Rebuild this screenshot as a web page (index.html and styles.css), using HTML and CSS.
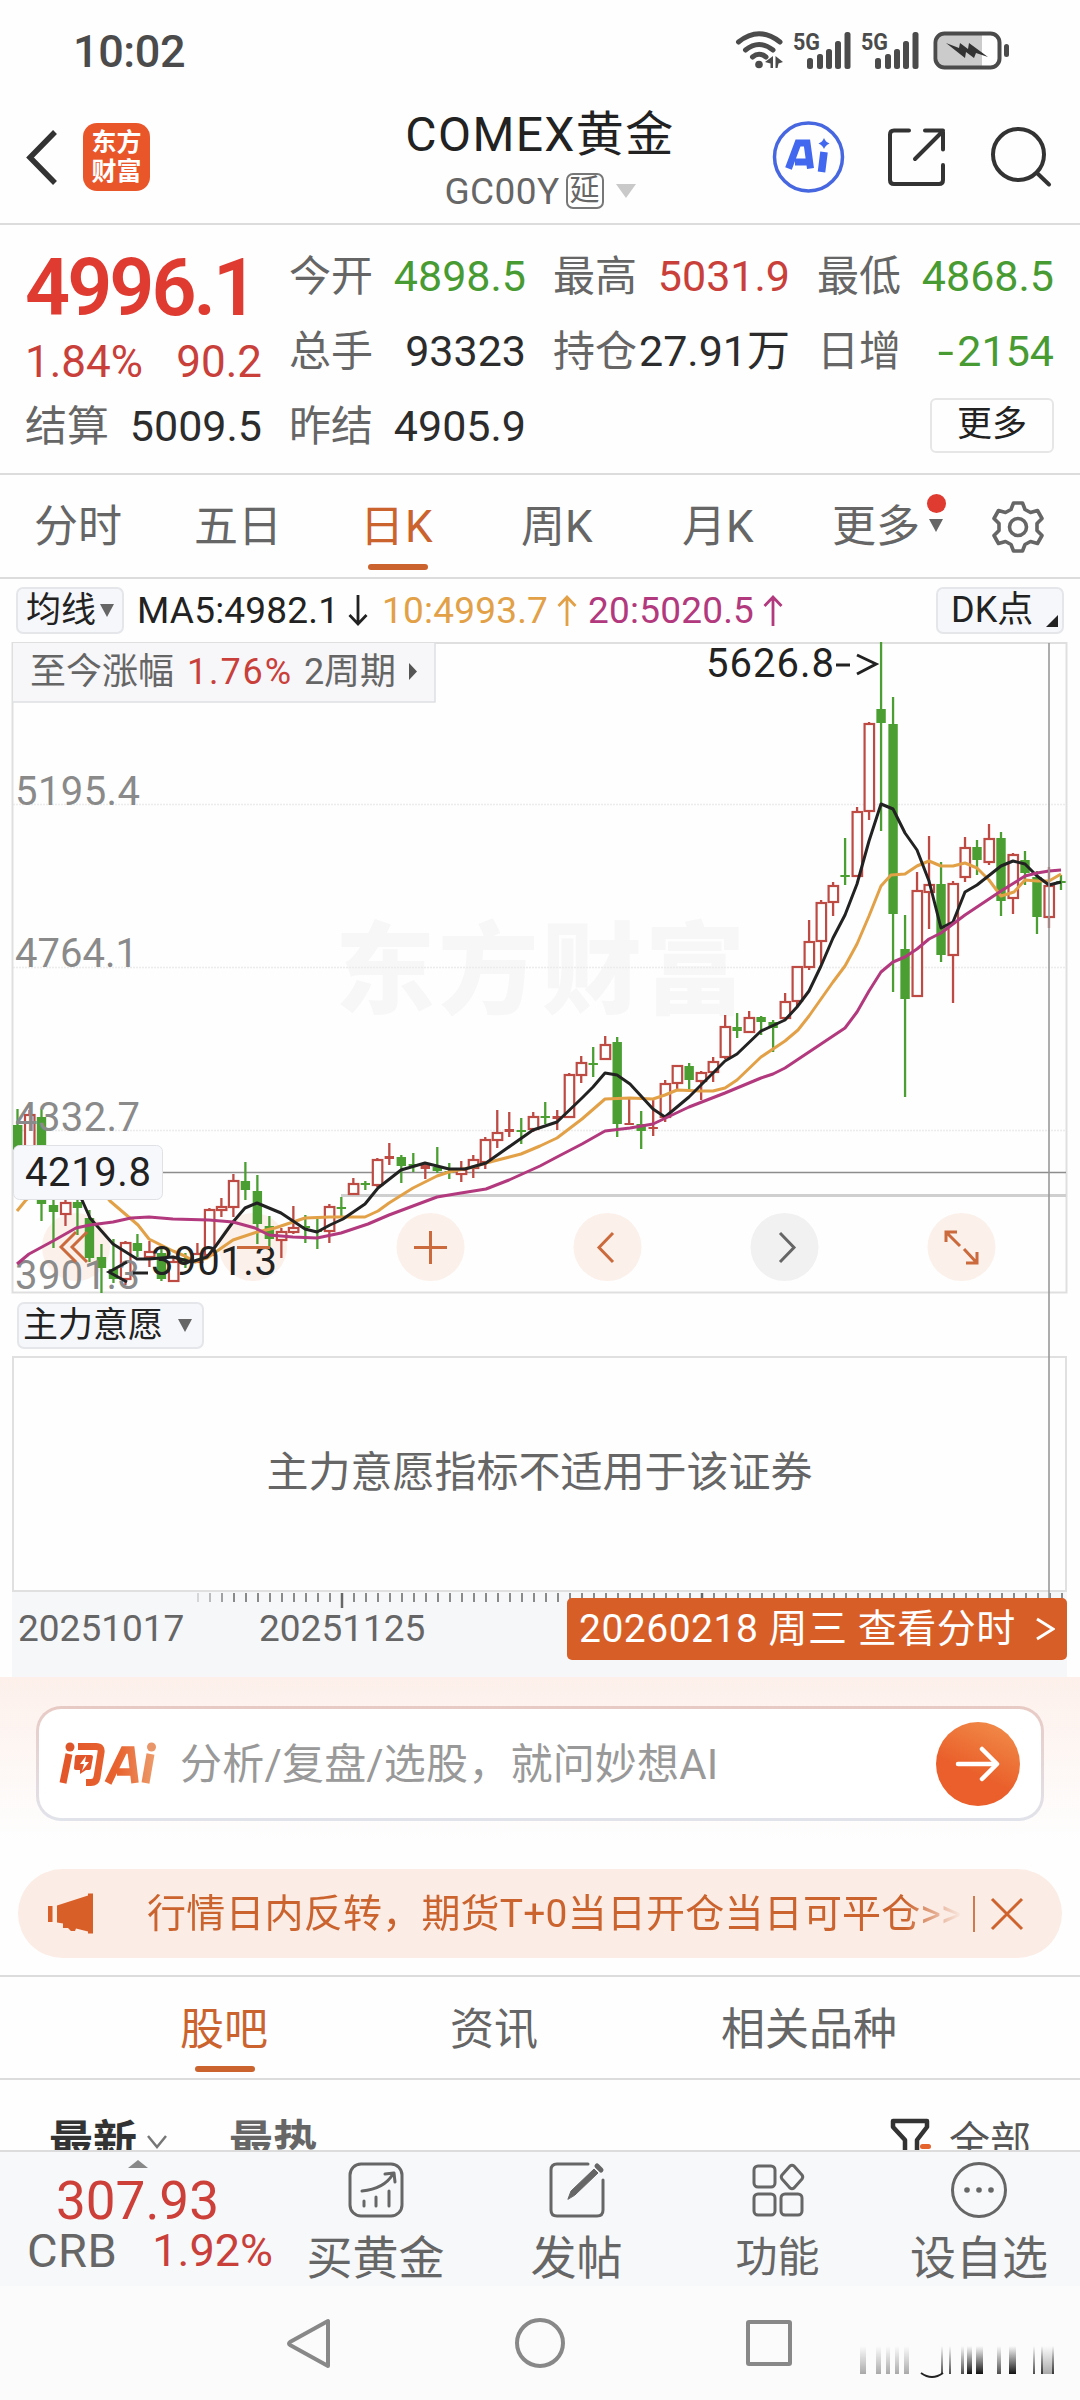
FILE: index.html
```html
<!DOCTYPE html>
<html lang="zh-CN">
<head>
<meta charset="utf-8">
<title>COMEX黄金</title>
<link rel="stylesheet" href="styles.css">
</head>
<body>
<div class="screen">
  <div class="status">
    <span class="clock">10:02</span>
    <svg class="status-icons" width="280" height="44" viewBox="732 28 280 44">
      <g fill="none" stroke="#4b4b4b" stroke-width="5" stroke-linecap="round">
        <path d="M738.500 42Q759 25.500 780 42M745.500 50Q759 39 773 50M752.500 57Q759 51.500 766 57"/>
      </g>
      <g fill="#4b4b4b">
        <circle cx="759" cy="64.500" r="3.800"/>
        <path d="M773 56v12h-2.500v-4.500L765 62zM775.500 56l7.500 6-4.500 1.500-1 4.500h-2z"/>
        <rect x="807" y="58" width="6" height="11" rx="2.500"/><rect x="817" y="54" width="6" height="15" rx="2.500"/><rect x="826" y="49" width="6" height="20" rx="2.500"/><rect x="835" y="41" width="6" height="28" rx="2.500"/><rect x="844.500" y="32" width="6" height="37" rx="2.500"/>
        <rect x="875" y="58" width="6" height="11" rx="2.500"/><rect x="885" y="54" width="6" height="15" rx="2.500"/><rect x="894" y="49" width="6" height="20" rx="2.500"/><rect x="903" y="41" width="6" height="28" rx="2.500"/><rect x="912.500" y="32" width="6" height="37" rx="2.500"/>
        <text class="five-g" x="793" y="50" textLength="27" lengthAdjust="spacingAndGlyphs">5G</text>
        <text class="five-g" x="861" y="50" textLength="27" lengthAdjust="spacingAndGlyphs">5G</text>
        <path d="M938 35h44v31h-44z" fill="#cbcbcb"/>
        <rect x="935.500" y="33.500" width="64" height="34" rx="9" fill="none" stroke="#4b4b4b" stroke-width="4"/>
        <path d="M946 43l13 5 1-5 8 6 1-6 19 14-12-4-2 5-8-6-1 6z" fill="#333"/>
        <rect x="1004" y="44" width="5" height="13" rx="2.500"/>
      </g>
    </svg>
  </div>

  <header class="header">
    <div class="header-left">
      <svg width="34" height="60" viewBox="0 0 34 60"><path d="M30 5L5 30.500 30 56" fill="none" stroke="#333" stroke-width="5.500"/></svg>
      <div class="brand"><span>东方</span><span>财富</span></div>
    </div>
    <div class="title-box">
      <h1 class="title">COMEX黄金</h1>
      <div class="subtitle"><span>GC00Y</span><span class="delay">延</span><i class="tri"></i></div>
    </div>
    <svg class="header-icons" width="290" height="80" viewBox="765 117 290 80" fill="none" stroke="#333" stroke-width="4" stroke-linecap="round" stroke-linejoin="round">
      <circle cx="808.500" cy="157" r="34" stroke="#4767e0" stroke-width="3.500"/>
      <path d="M788.500 168.500L798 143h9l3.500 25.500M795 162h13" stroke="#4168ef" stroke-width="7" stroke-linejoin="miter" stroke-linecap="butt"/>
      <path d="M824 152l-2.500 20" stroke="#4168ef" stroke-width="7.500" stroke-linecap="butt"/>
      <path d="M824 138q1.500 4 5.500 5.500-4 1.500-5.500 5.500-1.500-4-5.500-5.500 4-1.500 5.500-5.500z" fill="#4168ef" stroke="none"/>
      <path d="M909 130.500h-15q-4 0-4 4V180q0 4 4 4h45q4 0 4-4v-15M925 130.500h18v19M943 131l-28 28"/>
      <circle cx="1018.500" cy="154.500" r="25.500"/>
      <path d="M1037 173l12 11.500"/>
    </svg>
  </header>

  <section class="quote">
    <div class="price-cell">
      <div class="price">4996.1</div>
      <div class="change"><span>1.84%</span><span>90.2</span></div>
    </div>
    <div class="kv"><span>今开</span><b class="green">4898.5</b></div>
    <div class="kv"><span>最高</span><b class="red">5031.9</b></div>
    <div class="kv"><span>最低</span><b class="green">4868.5</b></div>
    <div class="kv"><span>总手</span><b>93323</b></div>
    <div class="kv"><span>持仓</span><b>27.91万</b></div>
    <div class="kv"><span>日增</span><b class="green"><i class="minus">-</i>2154</b></div>
    <div class="kv"><span>结算</span><b>5009.5</b></div>
    <div class="kv"><span>昨结</span><b>4905.9</b></div>
    <div class="more-cell"><span class="more-btn">更多</span></div>
  </section>

  <nav class="periods">
    <span class="p-min">分时</span><span class="p-five">五日</span><span class="p-day active">日K</span><span class="p-week">周K</span><span class="p-month">月K</span>
    <span class="p-more">更多<i class="dot"></i><i class="caret"></i></span>
    <svg class="gear" width="56" height="56" viewBox="-28 -28 56 56" fill="none" stroke="#666" stroke-width="3.600" stroke-linejoin="round">
      <path d="M-4.500-24h9L7-17.500 12.500-14.500 19.500-16.500 24-8.500 19-3.500V3.500L24 8.500 19.500 16.500 12.500 14.500 7 17.500 4.500 24h-9L-7 17.500-12.500 14.500-19.500 16.500-24 8.500-19 3.500V-3.500L-24-8.500-19.500-16.500-12.500-14.500-7-17.500z"/>
      <circle r="8.500"/>
    </svg>
  </nav>

  <div class="ma-row">
    <span class="chip ma-chip">均线<i class="caret"></i></span>
    <span class="ma ma5">MA5:4982.1<svg width="22" height="34" viewBox="0 0 22 34"><path d="M11 2v29M2.500 22L11 31l8.500-9"/></svg></span>
    <span class="ma ma10">10:4993.7<svg width="22" height="34" viewBox="0 0 22 34"><path d="M11 33V4M2.500 13L11 4l8.500 9"/></svg></span>
    <span class="ma ma20">20:5020.5<svg width="22" height="34" viewBox="0 0 22 34"><path d="M11 33V4M2.500 13L11 4l8.500 9"/></svg></span>
    <span class="chip dk-chip">DK点<i class="corner"></i></span>
  </div>

  <div class="plots">
    <svg class="chart" width="1080" height="652" viewBox="0 642 1080 652">
      <text class="wm" x="335" y="1006" textLength="410">东方财富</text>
      <g class="grid"><path d="M13 804.500H1066M13 967.500H1066M13 1130.500H1066"/></g>
      <path class="frame" d="M12.500 643H1066.500V1292.500H12.500z"/>
      <path d="M341 1195.500H1066" stroke="#cfcfcf" stroke-width="3"/>
      <path d="M13 1172.500H1066" stroke="#8d8d8d" stroke-width="1.500"/>
      <g class="tools">
        <circle cx="76" cy="1247" r="34"/><circle cx="253" cy="1247" r="34"/><circle cx="430.500" cy="1247" r="34"/><circle cx="607.500" cy="1247" r="34"/><circle class="off" cx="784.500" cy="1247" r="34"/><circle cx="961.500" cy="1247" r="34"/>
      </g>
      <g id="candles"></g>
      <g class="axis-label">
        <text x="15" y="805" textLength="125">5195.4</text>
        <text x="15" y="967" textLength="123">4764.1</text>
        <text x="15" y="1131" textLength="125">4332.7</text>
        <text x="15" y="1289" textLength="125">3901.3</text>
      </g>
      <g id="averages"></g>
      <g class="note"><text x="706" y="677" textLength="128">5626.8</text><path d="M836 665h14M857 655l19 9-19 10M127 1262l-18 10 18 10M133 1273h15"/><text x="151" y="1275" textLength="126">3901.3</text></g>
      <g class="tools">
        <path d="M76 1232l-15 15 15 15M87 1232l-15 15 15 15M237 1247.500h33M414 1247.500h33M430.500 1231v33M613 1233l-14 14.500 14 14.500M946 1242v-10h11M946 1232l14 14M966 1263h11v-11M977 1263l-13-14"/>
        <path class="next" d="M780 1233l14 14.500-14 14.500"/>
      </g>
      <rect x="13.500" y="1145.500" width="149" height="54" rx="6" fill="#f7f8fb" stroke="#dfe1e5"/>
      <text class="cross-val" x="25" y="1186" textLength="126">4219.8</text>
      <path d="M13 643H435V702H13z" fill="#f7f7fa"/><path d="M435 643V702H13" fill="none" stroke="#dedfe2" stroke-width="1.500"/>
      <g class="range"><text x="30" y="684" textLength="144">至今涨幅</text><text class="up" x="187" y="684" textLength="104">1.76%</text><text x="304" y="684" textLength="92">2周期</text><path d="M409 663v17l8-8.500z" fill="#555"/></g>
    </svg>
    <div class="ind-row"><span class="chip ind-chip">主力意愿<i class="caret"></i></span></div>
    <div class="panel">主力意愿指标不适用于该证券</div>
    <div class="timeline">
      <svg class="ticks" width="1055" height="18" viewBox="12 1592 1055 18" id="ticks"></svg>
      <div class="dates"><span>20251017</span><span>20251125</span></div>
      <span class="date-badge">20260218 周三 查看分时<svg width="20" height="26" viewBox="0 0 20 26"><path d="M2 3l16 10L2 23" fill="none" stroke="#fff" stroke-width="3"/></svg></span>
    </div>
    <i class="crosshair"></i>
  </div>

  <section class="ask">
    <div class="ask-box">
      <svg class="ask-logo" width="100" height="46" viewBox="58 1740 100 46">
        <defs><linearGradient id="lg" x1="58" x2="158" y1="0" y2="0" gradientUnits="userSpaceOnUse"><stop offset="0" stop-color="#e2552a"/><stop offset=".6" stop-color="#e8632f"/><stop offset="1" stop-color="#eda070"/></linearGradient></defs>
        <g fill="none" stroke="url(#lg)" stroke-width="7">
          <path d="M69 1754l-6 29M78 1746.500h18q6 0 5 6l-4 25q-1 5-6 5h-5"/>
          <path d="M108 1783l16-33h7l4 33M117 1772h17" stroke-width="7.500"/>
          <path d="M150.500 1754l-5 29" stroke-width="8"/>
        </g>
        <path d="M77 1755h14q2 0 2 2l-2 11q0 2-2 2h-3l-6 4v-4h-4q-2 0-2-2l1-11q0-2 2-2z" fill="#e2552a"/>
        <path d="M86 1756l-6 8h4l-2 7 7-9h-4z" fill="#fff"/>
        <circle cx="70" cy="1747" r="4.500" fill="#dd562b"/><circle cx="151.500" cy="1747" r="4.500" fill="#e8966a"/>
      </svg>
      <span class="ask-hint">分析/复盘/选股，就问妙想AI</span>
      <span class="go"><svg width="84" height="84" viewBox="0 0 84 84"><path d="M22 42h37M46 27l15 15-15 15" fill="none" stroke="#fff" stroke-width="4.500" stroke-linecap="round" stroke-linejoin="round"/></svg></span>
    </div>
  </section>

  <div class="banner">
    <svg width="48" height="42" viewBox="46 1893 48 42" fill="#d95f29"><path d="M48 1906h4.500v16H48zM57 1905.500l31-10v-2h5v40h-5v-2l-12-3-1 2.500h-4l-3-3h-5v-4.500l-6-1z"/></svg>
    <span class="banner-text">行情日内反转，期货T+0当日开仓当日可平仓&gt;&gt;</span>
    <i class="banner-line"></i>
    <svg width="34" height="34" viewBox="0 0 34 34"><path d="M2 2l30 30M32 2L2 32" stroke="#cf632d" stroke-width="3"/></svg>
  </div>

  <nav class="feeds"><span class="active">股吧</span><span>资讯</span><span>相关品种</span></nav>

  <div class="sort">
    <b>最新</b><svg class="sort-v" width="22" height="16" viewBox="0 0 22 16"><path d="M2 2l9 11 9-11" fill="none" stroke="#777" stroke-width="2.500"/></svg>
    <b class="hot">最热</b>
    <svg class="filter" width="44" height="44" viewBox="0 0 44 44"><path d="M4 4h34v6L28 23v17h-12V23L4 10z" fill="none" stroke="#333" stroke-width="4.500" stroke-linejoin="round"/><rect x="31" y="27" width="11" height="5" rx="2.500" fill="#e5632c"/></svg>
    <span class="all">全部</span>
  </div>

  <footer class="bar">
    <div class="crb"><i class="up-tri"></i><div class="crb-val">307.93</div><div class="crb-row"><span>CRB</span><span class="red">1.92%</span></div></div>
    <div class="act"><svg width="60" height="60" viewBox="-30 -30 60 60"><rect x="-26" y="-26" width="52" height="52" rx="11"/><path d="M-14 1Q8-1 17-16M9-16l9-1 1 9M-12 11v5M0 7v9M13 1v15"/></svg><span>买黄金</span></div>
    <div class="act"><svg width="60" height="60" viewBox="-30 -30 60 60"><path d="M11-26H-20q-6 0-6 6V20q0 6 6 6H20q6 0 6-6V-10"/><path d="M-9 9l3-8 23-22 4 4L-2 5z" fill="#666" stroke-width="1"/><path d="M20-24l4 4" stroke-width="5"/></svg><span>发帖</span></div>
    <div class="act fn"><svg width="60" height="60" viewBox="-30 -30 60 60"><rect x="-24" y="-24" width="21" height="21" rx="4"/><rect x="-24" y="4" width="21" height="21" rx="4"/><rect x="3" y="4" width="21" height="21" rx="4"/><path d="M12-24q2-1.500 4 0l8 9q1.500 2 0 4l-8 9q-2 1.500-4 0l-8-9q-1.500-2 0-4z"/></svg><span>功能</span></div>
    <div class="act"><svg width="60" height="60" viewBox="-30 -30 60 60"><circle r="26.500"/><g fill="#666" stroke="none"><circle cx="-12" r="2.800"/><circle r="2.800"/><circle cx="12" r="2.800"/></g></svg><span>设自选</span></div>
  </footer>

  <div class="sysnav">
    <svg width="1080" height="114" viewBox="0 2286 1080 114">
      <defs><linearGradient id="fade" x1="0" x2="0" y1="0" y2="1"><stop offset="0" stop-color="#222" stop-opacity="0"/><stop offset="1" stop-color="#111"/></linearGradient></defs>
      <g fill="none" stroke="#888" stroke-width="4" stroke-linejoin="round"><path d="M328 2321v45L290 2345q-2-1.500 0-3z"/><circle cx="540" cy="2343" r="23"/><rect x="748" y="2322" width="42" height="42" rx="1"/></g>
      <g fill="url(#fade)">
        <g opacity=".35"><rect x="860" y="2346" width="6" height="28"/><rect x="876" y="2346" width="5" height="28"/><rect x="886" y="2346" width="4" height="28"/><rect x="895" y="2346" width="4" height="28"/><rect x="904" y="2346" width="5" height="28"/><rect x="1041" y="2346" width="13" height="28"/></g>
        <g opacity=".75"><rect x="941" y="2346" width="2" height="28"/><rect x="949" y="2346" width="2" height="28"/><rect x="961" y="2346" width="3" height="28"/><rect x="997" y="2346" width="4" height="28"/><rect x="1033" y="2346" width="2" height="28"/><rect x="1041" y="2346" width="2" height="28"/><rect x="1052" y="2346" width="2" height="28"/></g>
        <rect x="967" y="2346" width="5" height="28"/><rect x="976" y="2346" width="7" height="28"/><rect x="1009" y="2346" width="7" height="28"/>
      </g>
      <path d="M921 2373q11 8 22 0" fill="none" stroke="#222" stroke-width="2"/>
    </svg>
  </div>
</div>
<script src="chart.js"></script>
</body>
</html>
```
FILE: chart.js
```js
// Each bar: colour (r hollow, f filled red, g green), high, body top, body bottom, low
const bars = `g 1109 1125 1150 1150|r 1110 1114 1150 1150|g 1109 1117 1204 1221|g 1190 1205 1212 1248|r 1190 1202 1214 1226|g 1195 1202 1208 1235|g 1210 1218 1258 1262|g 1244 1257 1268 1293|g 1239 1269 1279 1283|r 1241 1242 1279 1285|g 1234 1243 1251 1257|r 1241 1251 1257 1267|g 1248 1253 1279 1281|r 1257 1261 1281 1281|g 1253 1258 1262 1268|r 1243 1253 1262 1263|r 1208 1209 1255 1257|r 1198 1206 1210 1217|r 1174 1180 1207 1217|g 1162 1181 1190 1200|g 1175 1191 1224 1244|g 1216 1226 1239 1250|r 1228 1231 1240 1258|r 1206 1227 1232 1234|g 1215 1226 1227 1243|g 1219 1230 1232 1249|r 1204 1206 1231 1243|g 1197 1207 1208 1217|r 1178 1183 1194 1194|g 1181 1183 1185 1190|r 1158 1159 1185 1187|f 1143 1156 1159 1165|g 1155 1157 1166 1183|g 1153 1164 1165 1172|f 1162 1165 1169 1179|g 1147 1167 1171 1173|g 1163 1171 1172 1179|r 1161 1169 1174 1182|r 1155 1159 1168 1178|r 1137 1139 1162 1169|r 1110 1132 1140 1148|f 1112 1129 1132 1137|g 1118 1130 1132 1144|r 1112 1116 1129 1132|g 1102 1116 1118 1124|f 1110 1116 1119 1130|r 1073 1074 1117 1117|r 1056 1062 1075 1083|g 1047 1063 1065 1077|r 1036 1044 1059 1060|g 1037 1042 1124 1137|f 1097 1123 1125 1125|g 1111 1124 1131 1149|f 1100 1127 1129 1136|r 1080 1083 1117 1122|r 1065 1065 1083 1090|g 1063 1066 1080 1091|r 1071 1072 1081 1100|r 1057 1061 1072 1082|r 1015 1026 1057 1059|g 1013 1027 1031 1038|r 1011 1017 1032 1032|g 1016 1017 1022 1035|g 1020 1022 1028 1052|r 993 1001 1018 1020|r 966 966 1001 1006|r 920 941 967 970|r 900 902 941 965|r 882 885 902 916|g 838 875 876 885|r 807 811 876 877|r 722 723 811 820|g 642 709 723 831|g 697 724 914 992|g 915 949 999 1097|r 872 890 996 997|r 836 884 892 929|g 862 884 955 962|r 881 883 955 1003|r 837 847 877 882|g 840 847 860 875|r 824 838 862 865|g 832 838 901 916|r 853 854 898 914|g 851 860 873 885|g 871 877 917 934|r 867 885 917 928|g 875 881 883 890`;
const lines = {
  '#e2a047': '17,1211 26,1200 60,1172 95,1183 110,1201 138,1225 149,1239 173,1251 185,1256 195,1262 207,1258 220,1249 233,1240 257,1232 275,1228 293,1222 305,1218 330,1217 365,1217 378,1211 389,1203 413,1188 437,1176 449,1172 473,1167 486,1163 521,1154 540,1146 557,1138 582,1119 605,1099 630,1098 653,1099 665,1095 677,1090 701,1091 713,1091 725,1088 737,1080 761,1057 785,1041 798,1030 809,1016 833,982 845,966 857,944 869,916 881,886 891,875 905,874 917,866 929,861 941,866 953,866 965,863 977,868 989,880 1001,896 1014,892 1025,880 1037,881 1049,881 1061,874',
  '#222': '76,1188 82,1200 90,1218 113,1244 137,1259 149,1259 173,1257 191,1262 207,1257 215,1247 233,1222 245,1208 257,1203 281,1213 305,1229 317,1232 330,1225 343,1219 365,1204 378,1188 401,1170 425,1163 449,1169 465,1169 486,1163 533,1130 545,1126 557,1122 582,1098 593,1087 605,1073 617,1075 630,1084 653,1109 665,1117 689,1097 725,1061 737,1054 761,1031 785,1020 797,1007 809,991 821,966 833,938 845,915 857,884 869,841 881,804 893,809 905,833 917,850 929,881 941,928 953,922 965,892 977,885 1001,866 1013,861 1025,864 1037,876 1049,885 1061,882',
  '#b2397d': '17,1264 29,1254 53,1241 76,1228 90,1225 113,1222 131,1218 149,1217 173,1219 209,1220 233,1222 255,1228 269,1235 293,1237 317,1238 341,1233 368,1224 389,1215 437,1197 461,1193 486,1189 509,1180 540,1166 557,1157 582,1144 605,1131 630,1128 653,1124 689,1107 725,1093 761,1078 773,1074 785,1068 797,1060 821,1044 845,1028 857,1012 869,991 881,972 893,962 905,957 917,949 929,939 941,933 953,924 965,915 989,899 1001,891 1014,883 1025,876 1037,873 1049,871 1061,870'
};
let out = '';
bars.split('|').forEach((row, i) => {
  const [kind, ...v] = row.split(' ');
  const [hi, top, bottom, lo] = v.map(Number);
  const x = 17.5 + 11.994 * i;
  const color = kind === 'g' ? '#4b9f32' : '#bd4a43';
  const h = Math.max(2, bottom - top);
  const left = Math.max(13, x - 4.7);
  out += `<path d="M${x} ${hi}V${top}M${x} ${bottom}V${lo}" stroke="${color}" stroke-width="2.300"/>`;
  out += kind === 'r'
    ? `<rect x="${x - 4.5}" y="${top + 1}" width="9.500" height="${Math.max(1, h - 1)}" fill="#fefefe" stroke="${color}" stroke-width="2.200"/>`
    : `<rect x="${left}" y="${top}" width="9.400" height="${h}" fill="${color}"/>`;
});
document.getElementById('candles').innerHTML = out;
document.getElementById('averages').innerHTML = Object.entries(lines).map(([c, p]) =>
  `<polyline points="${p}" fill="none" stroke="${c}" stroke-width="3" stroke-linejoin="round"/>`).join('');
let ticks = '';
for (let i = 0; i <= 72; i++) {
  const x = 198 + i * 12;
  const major = i === 12 || i === 42;
  ticks += `<path d="M${x} 1593V${major ? 1608 : 1602}" stroke="#666" stroke-width="${major ? 2.5 : 1.5}" opacity="${i < 3 ? 0.3 + i * 0.25 : 1}"/>`;
}
document.getElementById('ticks').innerHTML = ticks;
```
FILE: styles.css
```css
* { box-sizing: border-box; }
body { margin: 0; background: #fff; }
.screen { width: 1080px; height: 2400px; overflow: hidden; background: #fefefe; color: #2c2c2c; font-family: Roboto, "Noto Sans CJK SC", sans-serif; line-height: 1; display: flex; flex-direction: column; }
.screen > * { flex: none; }
svg { display: block; flex: none; }
i { font-style: normal; }
.red { color: #c9403b !important; }
.green { color: #489b33 !important; }

.status { height: 100px; padding: 0 68px 0 73px; display: flex; justify-content: space-between; }
.clock { margin-top: 29px; font-size: 45px; font-weight: 500; color: #4b4b4b; letter-spacing: -0.4px; }
.status-icons { margin-top: 28px; }
.five-g { font: 700 24px Roboto, sans-serif; }

.header { height: 125px; border-bottom: 2px solid #dcdcdc; padding: 0 25px; display: grid; grid-template-columns: 290px 1fr 290px; }
.header-left { display: flex; gap: 24px; padding-top: 23px; }
.header-left svg { margin-top: 4px; }
.brand { width: 67px; height: 68px; border-radius: 14px; background: #e8562a; color: #fff; display: flex; flex-direction: column; align-items: center; justify-content: center; font-size: 25px; font-weight: 700; line-height: 29px; }
.title-box { display: flex; flex-direction: column; align-items: center; }
.title { margin: 8px 0 0; font-size: 48px; font-weight: 400; line-height: 54px; letter-spacing: 1.4px; white-space: nowrap; color: #222; }
.subtitle { margin-top: 9px; height: 40px; display: flex; align-items: center; font-size: 37px; color: #666; letter-spacing: 0.4px; }
.delay { width: 38px; height: 36px; margin-left: 6px; border: 2px solid #777; border-radius: 7px; font-size: 30px; line-height: 30px; text-align: center; letter-spacing: 0; }
.tri { margin-left: 12px; border: 10px solid transparent; border-top: 14px solid #c9c9c9; border-bottom: 0; }
.header-icons { margin-top: 17px; }

.quote { height: 250px; border-bottom: 2px solid #dcdcdc; padding: 14px 24px 0 25px; display: grid; grid-template-columns: repeat(4, 237px); grid-auto-rows: 75px; column-gap: 27px; }
.price-cell { grid-row: span 2; }
.price { margin-top: 11px; font-size: 79px; font-weight: 600; line-height: 76px; letter-spacing: -3px; color: #df3b31; }
.change { margin-top: 13px; display: flex; justify-content: space-between; font-size: 44px; line-height: 46px; letter-spacing: 0; color: #c9403b; }
.kv { display: flex; justify-content: space-between; align-items: center; font-size: 42px; }
.kv span { color: #666; }
.kv b { font-weight: 400; font-size: 43px; letter-spacing: 0; white-space: nowrap; }
.minus { display: inline-block; transform: scaleX(1.35); transform-origin: right; margin-right: 3px; }
.more-cell { grid-column: 4; display: flex; justify-content: flex-end; align-items: center; padding-bottom: 3px; }
.more-btn { width: 124px; height: 55px; border: 2px solid #e6e6e6; border-radius: 6px; font-size: 35px; line-height: 50px; text-align: center; color: #222; }

.periods { height: 104px; border-bottom: 2px solid #dcdcdc; display: grid; grid-template-columns: 160px 166px 161px 161px 150px 158px 64px; padding-left: 34px; padding-top: 2px; align-items: center; font-size: 44px; color: #666; }
.periods span { position: relative; white-space: nowrap; justify-self: start; }
.periods .active { color: #cb632e; letter-spacing: 1px; }
.periods .active::after { content: ""; position: absolute; left: 8px; top: 59px; width: 60px; height: 6px; border-radius: 3px; background: #cb632e; }
.dot { position: absolute; left: 95px; top: -11px; width: 19px; height: 19px; border-radius: 50%; background: #df3b31; }
.caret { display: inline-block; border: 7px solid transparent; border-top: 13px solid #666; border-bottom: 0; }
.p-more .caret { position: absolute; left: 97px; top: 14px; }

.ma-row { height: 63px; display: flex; align-items: center; padding: 0 16px 1px; }
.chip { display: flex; align-items: center; height: 47px; border: 2px solid #e4e6ea; border-radius: 7px; background: #f6f7fa; color: #222; font-size: 35px; position: relative; white-space: nowrap; }
.ma-chip { width: 108px; padding-left: 8px; }
.ma-chip .caret { margin-left: 4px; }
.ma { display: flex; align-items: center; font-size: 37px; letter-spacing: 0.2px; }
.ma svg { fill: none; stroke: currentColor; stroke-width: 2.8; margin-left: 8px; }
.ma5 { margin-left: 13px; width: 245px; color: #222; }
.ma10 { width: 206px; color: #e2a047; }
.ma20 { color: #b2397d; }
.dk-chip { width: 128px; margin-left: auto; padding-left: 13px; font-size: 36px; }
.corner { position: absolute; right: 4px; bottom: 5px; border-left: 12px solid transparent; border-bottom: 12px solid #222; }

.plots { position: relative; }
.grid { stroke: #ececec; stroke-width: 1.5; stroke-dasharray: 2 1; fill: none; }
.frame { fill: none; stroke: #dfdfdf; stroke-width: 2; }
.wm { font: 900 100px "Noto Sans CJK SC", sans-serif; fill: #f7f7f7; }
.axis-label { font-size: 40px; fill: #8a8a8a; }
.note, .cross-val { font-size: 40px; fill: #222; }
.note path { fill: none; stroke: #222; stroke-width: 3; }
.tools circle { fill: #fbf0ea; }
.tools .off { fill: #f1f1f2; }
.tools path { fill: none; stroke: #cb6a3c; stroke-width: 3; }
.tools .next { stroke: #666; }
.range { font-size: 36px; fill: #666; }
.range .up { fill: #c9403b; }
.ind-row { height: 62px; padding: 8px 17px 0; }
.ind-chip { width: 187px; padding-left: 4px; }
.ind-chip .caret { margin-left: 15px; }
.panel { height: 236px; margin: 0 13px 0 12px; border: 2px solid #e0e0e0; font-size: 42px; line-height: 230px; text-align: center; color: #666; }
.timeline { position: relative; height: 85px; margin: 0 13px 0 12px; background: #f6f7f9; }
.dates { display: flex; gap: 75px; padding: 0 0 0 6px; font-size: 37px; color: #666; }
.dates span { width: 166px; }
.date-badge { position: absolute; left: 555px; top: 6px; width: 500px; height: 62px; border-radius: 5px; background: #d85e28; color: #fff; font-size: 39px; letter-spacing: 0.5px; line-height: 62px; padding: 0 12px 0 12px; display: flex; justify-content: space-between; align-items: center; white-space: nowrap; }
.crosshair { position: absolute; left: 1048px; top: 1px; width: 2px; height: 955px; background: #999; opacity: 0.8; }

.ask { height: 192px; padding: 29px 36px 0; background: linear-gradient(#fdf0eb, #fefefe 85%); }
.ask-box { height: 115px; border: 3px solid transparent; border-radius: 25px; background: linear-gradient(#fff, #fff) padding-box, linear-gradient(#e8cac4, #e1e3eb) border-box; display: flex; align-items: center; padding: 0 21px 0 19px; }
.ask-logo { margin-top: -2px; }
.ask-hint { margin: 3px 0 0 22px; font-size: 42px; letter-spacing: 0.2px; color: #999; white-space: nowrap; }
.go { margin-left: auto; width: 84px; height: 84px; border-radius: 50%; background: linear-gradient(205deg, #f2914d, #ea5f2b 60%); }

.banner { height: 89px; margin: 0 18px; border-radius: 45px; background: #fbece5; display: flex; align-items: center; padding: 0 38px 0 28px; color: #cb632e; }
.banner-text { margin-left: 53px; width: 815px; font-size: 39px; letter-spacing: 0.2px; line-height: 60px; white-space: nowrap; overflow: hidden; -webkit-mask-image: linear-gradient(90deg, #000 93%, transparent); mask-image: linear-gradient(90deg, #000 93%, transparent); }
.banner-line { width: 2px; height: 36px; margin: 0 15px 0 11px; background: #d07a4f; }

.feeds { height: 105px; margin-top: 17px; border-top: 2px solid #dcdcdc; border-bottom: 2px solid #dcdcdc; display: grid; grid-template-columns: 270px 271px 1fr; padding: 4px 0 0 180px; align-items: center; font-size: 44px; color: #666; }
.feeds span { position: relative; justify-self: start; }
.feeds .active { color: #cb632e; }
.feeds .active::after { content: ""; position: absolute; left: 15px; top: 58px; width: 60px; height: 6px; border-radius: 3px; background: #cb632e; }

.sort { height: 70px; overflow: hidden; display: flex; align-items: flex-start; padding-left: 49px; font-size: 44px; color: #333; }
.sort b, .all { margin-top: 38px; line-height: 48px; font-weight: 700; }
.sort-v { margin: 54px 0 0 9px; }
.sort .hot { margin-left: 61px; color: #666; }
.filter { margin: 37px 0 0 572px; }
.sort .all { margin-left: 16px; font-size: 41px; font-weight: 400; color: #555; }

.bar { height: 136px; border-top: 2px solid #dcdcdc; background: #f7f8fa; display: grid; grid-template-columns: 275px 201px 201px 201px 202px; }
.crb { display: flex; flex-direction: column; align-items: center; }
.up-tri { margin-top: 8px; border: 10px solid transparent; border-bottom: 8px solid #888; border-top: 0; }
.crb-val { margin-top: 6px; font-size: 53px; line-height: 54px; color: #cd3f39; }
.crb-row { margin: -1px 0 0 25px; width: 246px; display: flex; justify-content: space-between; align-items: center; font-size: 45px; line-height: 48px; color: #666; letter-spacing: 0; }
.crb-row span:first-child { font-size: 47px; letter-spacing: 0.5px; }
.act { display: flex; flex-direction: column; align-items: center; font-size: 46px; color: #666; }
.act svg { margin-top: 8px; fill: none; stroke: #666; stroke-width: 3; stroke-linecap: round; stroke-linejoin: round; }
.act span { margin-top: 10px; line-height: 56px; }
.fn { font-size: 42px; }
.sysnav { height: 114px; background: #fbfbfb; }
```
